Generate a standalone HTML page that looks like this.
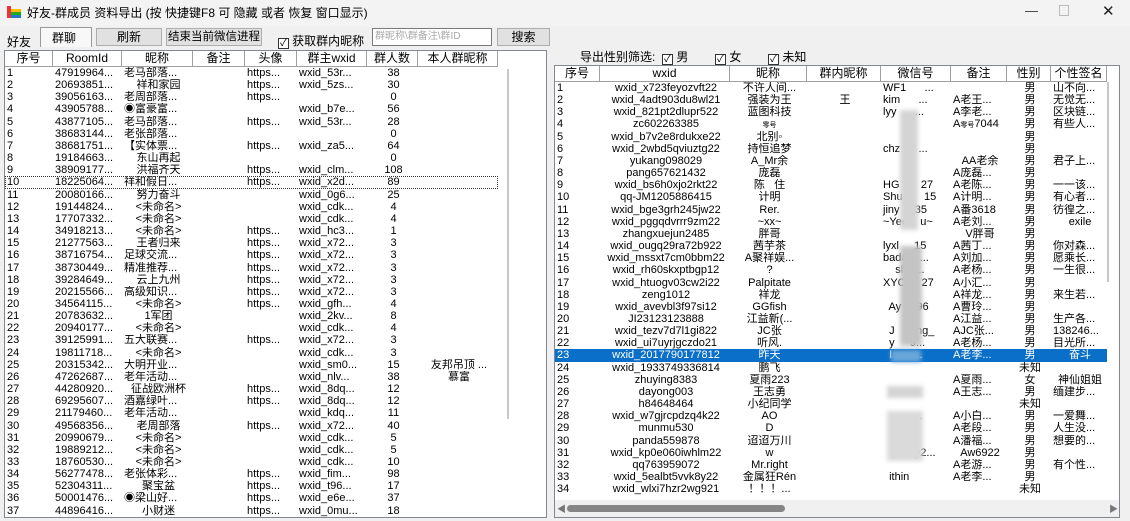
<!DOCTYPE html>
<html><head><meta charset="utf-8"><style>
*{box-sizing:border-box;margin:0;padding:0}
body{width:1130px;height:521px;overflow:hidden;background:#f0f0f0;font-family:"Liberation Sans","Noto Sans CJK SC",sans-serif;font-size:11px;color:#000;position:relative}
.abs{position:absolute}
.title{left:0;top:0;width:1130px;height:26px;background:#f3f3f3}
.btn{position:absolute;border:1px solid #adadad;background:#e1e1e1;text-align:center;font-size:12px;line-height:16px;white-space:nowrap;overflow:hidden}
.lb{position:absolute;background:#fff;border:1px solid #828790;overflow:hidden}
table,tbody{display:block;position:absolute;left:0}
tr{display:flex;height:12.17px;overflow:hidden}
tr.h{height:16px}
td{display:block;flex:none;height:12.17px;line-height:12px;white-space:nowrap;overflow:hidden;padding:0 0 0 2px}
th{display:block;flex:none;height:16px;font-weight:normal;font-size:12px;border-right:1px solid #a0a0a0;border-bottom:1px solid #a0a0a0;background:#fff;line-height:15px;white-space:nowrap;overflow:hidden;text-align:center}
#L td:nth-child(1),#L th:nth-child(1){width:48px}
#L td:nth-child(2),#L th:nth-child(2){width:69px}
#L td:nth-child(3),#L th:nth-child(3){width:71px}
#L td:nth-child(4),#L th:nth-child(4){width:52px}
#L td:nth-child(5),#L th:nth-child(5){width:52px}
#L td:nth-child(6),#L th:nth-child(6){width:70px}
#L td:nth-child(7),#L th:nth-child(7){width:51px}
#L td:nth-child(8),#L th:nth-child(8){width:80px}
#R td:nth-child(1),#R th:nth-child(1){width:45px}
#R td:nth-child(2),#R th:nth-child(2){width:130px}
#R td:nth-child(3),#R th:nth-child(3){width:77px}
#R td:nth-child(4),#R th:nth-child(4){width:74px}
#R td:nth-child(5),#R th:nth-child(5){width:70px}
#R td:nth-child(6),#R th:nth-child(6){width:56px}
#R td:nth-child(7),#R th:nth-child(7){width:44px}
#R td:nth-child(8),#R th:nth-child(8){width:56px}
.c{text-align:center}
.sel td{background:#0a6fc8;color:#fff}
.blur{position:absolute;background:#d4d4d4;filter:blur(2px)}
.cb{display:inline-block;width:11px;height:11px;border:1px solid #333;background:#fff;font-size:10px;line-height:9px;text-align:center;vertical-align:-1px}
.sm{font-size:7px}
</style></head><body>
<div class="abs title"></div>
<svg class="abs" style="left:7px;top:5px" width="14" height="14"><rect x="0" y="1" width="4" height="12" fill="#e33"/><rect x="4" y="4" width="10" height="3" fill="#fb0"/><rect x="4" y="7" width="10" height="3" fill="#2a2"/><rect x="4" y="10" width="10" height="3" fill="#27c"/></svg>
<div class="abs" style="left:27px;top:4px;font-size:12px">好友-群成员 资料导出 (按 快捷键F8 可 隐藏 或者 恢复 窗口显示)</div>
<div class="abs" style="left:1025px;top:3px;font-size:13px;color:#333">—</div>
<div class="abs" style="left:1059px;top:5px;width:10px;height:11px;border:1px solid #bbb"></div>
<div class="abs" style="left:1102px;top:2px;font-size:15px;color:#222">✕</div>

<div class="abs" style="left:7px;top:33px;font-size:12px">好友</div>
<div class="abs" style="left:40px;top:27px;width:52px;height:20px;border:1px solid #999;border-bottom:none;background:#f8f8f8"></div>
<div class="abs" style="left:52px;top:29px;font-size:12px">群聊</div>
<div class="btn" style="left:96px;top:28px;width:66px;height:18px">刷新</div>
<div class="btn" style="left:166px;top:28px;width:96px;height:18px;font-size:11.5px">结束当前微信进程</div>
<div class="abs" style="left:278px;top:32px"><span class="cb">✓</span> <span style="font-size:12px">获取群内昵称</span></div>
<div class="abs" style="left:372px;top:28px;width:120px;height:18px;background:#fff;border:1px solid #7a7a7a;color:#aaa;font-size:10px;line-height:16px;padding-left:2px">群昵称\群备注\群ID</div>
<div class="btn" style="left:497px;top:28px;width:53px;height:18px">搜索</div>

<div class="lb" style="left:4px;top:50px;width:543px;height:468px">
<table id="L" style="top:0;width:493px"><tbody>
<tr class="h"><th>序号</th><th>RoomId</th><th>昵称</th><th>备注</th><th>头像</th><th>群主wxid</th><th>群人数</th><th>本人群昵称</th></tr>
<tr><td>1</td><td>47919964...</td><td>老马部落...</td><td></td><td>https...</td><td>wxid_53r...</td><td class="c">38</td><td></td></tr>
<tr><td>2</td><td>20693851...</td><td class="c">祥和家园</td><td></td><td>https...</td><td>wxid_5zs...</td><td class="c">30</td><td></td></tr>
<tr><td>3</td><td>39056163...</td><td>老周部落...</td><td></td><td>https...</td><td></td><td class="c">0</td><td></td></tr>
<tr><td>4</td><td>43905788...</td><td>◉富豪富...</td><td></td><td></td><td>wxid_b7e...</td><td class="c">56</td><td></td></tr>
<tr><td>5</td><td>43877105...</td><td>老马部落...</td><td></td><td>https...</td><td>wxid_53r...</td><td class="c">28</td><td></td></tr>
<tr><td>6</td><td>38683144...</td><td>老张部落...</td><td></td><td></td><td></td><td class="c">0</td><td></td></tr>
<tr><td>7</td><td>38681751...</td><td>【实体票...</td><td></td><td>https...</td><td>wxid_za5...</td><td class="c">64</td><td></td></tr>
<tr><td>8</td><td>19184663...</td><td class="c">东山再起</td><td></td><td></td><td></td><td class="c">0</td><td></td></tr>
<tr><td>9</td><td>38909177...</td><td class="c">洪福齐天</td><td></td><td>https...</td><td>wxid_clm...</td><td class="c">108</td><td></td></tr>
<tr style="outline:1px dotted #333;outline-offset:-1px"><td>10</td><td>18225064...</td><td>祥和假日...</td><td></td><td>https...</td><td>wxid_x2d...</td><td class="c">89</td><td></td></tr>
<tr><td>11</td><td>20080166...</td><td class="c">努力奋斗</td><td></td><td></td><td>wxid_0g6...</td><td class="c">25</td><td></td></tr>
<tr><td>12</td><td>19144824...</td><td class="c">&lt;未命名&gt;</td><td></td><td></td><td>wxid_cdk...</td><td class="c">4</td><td></td></tr>
<tr><td>13</td><td>17707332...</td><td class="c">&lt;未命名&gt;</td><td></td><td></td><td>wxid_cdk...</td><td class="c">4</td><td></td></tr>
<tr><td>14</td><td>34918213...</td><td class="c">&lt;未命名&gt;</td><td></td><td>https...</td><td>wxid_hc3...</td><td class="c">1</td><td></td></tr>
<tr><td>15</td><td>21277563...</td><td class="c">王者归来</td><td></td><td>https...</td><td>wxid_x72...</td><td class="c">3</td><td></td></tr>
<tr><td>16</td><td>38716754...</td><td>足球交流...</td><td></td><td>https...</td><td>wxid_x72...</td><td class="c">3</td><td></td></tr>
<tr><td>17</td><td>38730449...</td><td>精准推荐...</td><td></td><td>https...</td><td>wxid_x72...</td><td class="c">3</td><td></td></tr>
<tr><td>18</td><td>39284649...</td><td class="c">云上九州</td><td></td><td>https...</td><td>wxid_x72...</td><td class="c">3</td><td></td></tr>
<tr><td>19</td><td>20215566...</td><td>高级知识...</td><td></td><td>https...</td><td>wxid_x72...</td><td class="c">3</td><td></td></tr>
<tr><td>20</td><td>34564115...</td><td class="c">&lt;未命名&gt;</td><td></td><td>https...</td><td>wxid_gfh...</td><td class="c">4</td><td></td></tr>
<tr><td>21</td><td>20783632...</td><td class="c">1军团</td><td></td><td></td><td>wxid_2kv...</td><td class="c">8</td><td></td></tr>
<tr><td>22</td><td>20940177...</td><td class="c">&lt;未命名&gt;</td><td></td><td></td><td>wxid_cdk...</td><td class="c">4</td><td></td></tr>
<tr><td>23</td><td>39125991...</td><td>五大联赛...</td><td></td><td>https...</td><td>wxid_x72...</td><td class="c">3</td><td></td></tr>
<tr><td>24</td><td>19811718...</td><td class="c">&lt;未命名&gt;</td><td></td><td></td><td>wxid_cdk...</td><td class="c">3</td><td></td></tr>
<tr><td>25</td><td>20315342...</td><td>大明开业...</td><td></td><td></td><td>wxid_sm0...</td><td class="c">15</td><td class="c">友邦吊顶 ...</td></tr>
<tr><td>26</td><td>47262687...</td><td>老年活动...</td><td></td><td></td><td>wxid_nlv...</td><td class="c">38</td><td class="c">慕富</td></tr>
<tr><td>27</td><td>44280920...</td><td class="c">征战欧洲杯</td><td></td><td>https...</td><td>wxid_8dq...</td><td class="c">12</td><td></td></tr>
<tr><td>28</td><td>69295607...</td><td>酒嘉绿叶...</td><td></td><td>https...</td><td>wxid_8dq...</td><td class="c">12</td><td></td></tr>
<tr><td>29</td><td>21179460...</td><td>老年活动...</td><td></td><td></td><td>wxid_kdq...</td><td class="c">11</td><td></td></tr>
<tr><td>30</td><td>49568356...</td><td class="c">老周部落</td><td></td><td>https...</td><td>wxid_x72...</td><td class="c">40</td><td></td></tr>
<tr><td>31</td><td>20990679...</td><td class="c">&lt;未命名&gt;</td><td></td><td></td><td>wxid_cdk...</td><td class="c">5</td><td></td></tr>
<tr><td>32</td><td>19889212...</td><td class="c">&lt;未命名&gt;</td><td></td><td></td><td>wxid_cdk...</td><td class="c">5</td><td></td></tr>
<tr><td>33</td><td>18760530...</td><td class="c">&lt;未命名&gt;</td><td></td><td></td><td>wxid_cdk...</td><td class="c">10</td><td></td></tr>
<tr><td>34</td><td>56277478...</td><td>老张体彩...</td><td></td><td>https...</td><td>wxid_fim...</td><td class="c">98</td><td></td></tr>
<tr><td>35</td><td>52304311...</td><td class="c">聚宝盆</td><td></td><td>https...</td><td>wxid_t96...</td><td class="c">17</td><td></td></tr>
<tr><td>36</td><td>50001476...</td><td>◉梁山好...</td><td></td><td>https...</td><td>wxid_e6e...</td><td class="c">37</td><td></td></tr>
<tr><td>37</td><td>44896416...</td><td class="c">小财迷</td><td></td><td>https...</td><td>wxid_0mu...</td><td class="c">18</td><td></td></tr>
</tbody></table>
<div class="abs" style="left:502px;top:18px;width:2px;height:350px;background:#c8c8c8"></div>
</div>

<div class="abs" style="left:580px;top:48px;font-size:12px">导出性别筛选: &nbsp;<span class="cb">✓</span> 男 &nbsp; &nbsp; &nbsp; &nbsp;<span class="cb">✓</span> 女 &nbsp; &nbsp; &nbsp; &nbsp;<span class="cb">✓</span> 未知</div>

<div class="lb" style="left:554px;top:65px;width:566px;height:453px">
<table id="R" style="top:0;width:552px"><tbody>
<tr class="h"><th>序号</th><th>wxid</th><th>昵称</th><th>群内昵称</th><th>微信号</th><th>备注</th><th>性别</th><th>个性签名</th></tr>
<tr><td>1</td><td class="c">wxid_x723feyozvft22</td><td class="c">不许人间...</td><td></td><td>WF1 &nbsp; &nbsp; &nbsp;...</td><td></td><td class="c">男</td><td>山不向...</td></tr>
<tr><td>2</td><td class="c">wxid_4adt903du8wl21</td><td class="c">强装为王</td><td class="c">王</td><td>kim &nbsp; &nbsp; &nbsp;...</td><td>A老王...</td><td class="c">男</td><td>无觉无...</td></tr>
<tr><td>3</td><td class="c">wxid_821pt2dlupr522</td><td class="c">蓝图科技</td><td></td><td>lyy &nbsp; &nbsp; &nbsp;...</td><td>A李老...</td><td class="c">男</td><td>区块链...</td></tr>
<tr><td>4</td><td class="c">zc602263385</td><td class="c"><span class="sm">零号</span></td><td></td><td></td><td>A<span class="sm">零号</span>7044</td><td class="c">男</td><td>有些人...</td></tr>
<tr><td>5</td><td class="c">wxid_b7v2e8rdukxe22</td><td class="c">北别◦</td><td></td><td></td><td></td><td class="c">男</td><td></td></tr>
<tr><td>6</td><td class="c">wxid_2wbd5qviuztg22</td><td class="c">持恒追梦</td><td></td><td>chz &nbsp; &nbsp; &nbsp;...</td><td></td><td class="c">男</td><td></td></tr>
<tr><td>7</td><td class="c">yukang098029</td><td class="c">A_Mr余</td><td></td><td></td><td class="c">AA老余</td><td class="c">男</td><td>君子上...</td></tr>
<tr><td>8</td><td class="c">pang657621432</td><td class="c">庞磊</td><td></td><td></td><td>A庞磊...</td><td class="c">男</td><td></td></tr>
<tr><td>9</td><td class="c">wxid_bs6h0xjo2rkt22</td><td class="c">陈 &nbsp; 住</td><td></td><td>HG &nbsp; &nbsp; &nbsp; 27</td><td>A老陈...</td><td class="c">男</td><td>一一该...</td></tr>
<tr><td>10</td><td class="c">qq-JM1205886415</td><td class="c">计明</td><td></td><td>Shu &nbsp; &nbsp; &nbsp; 15</td><td>A计明...</td><td class="c">男</td><td>有心者...</td></tr>
<tr><td>11</td><td class="c">wxid_bge3grh245jw22</td><td class="c">Rer.</td><td></td><td>jiny &nbsp; &nbsp; 35</td><td>A番3618</td><td class="c">男</td><td>彷徨之...</td></tr>
<tr><td>12</td><td class="c">wxid_pggqdvrrr9zm22</td><td class="c">~xx~</td><td></td><td>~Yee &nbsp; &nbsp;u~</td><td>A老刘...</td><td class="c">男</td><td class="c">exile</td></tr>
<tr><td>13</td><td class="c">zhangxuejun2485</td><td class="c">胖哥</td><td></td><td></td><td class="c">V胖哥</td><td class="c">男</td><td></td></tr>
<tr><td>14</td><td class="c">wxid_ougq29ra72b922</td><td class="c">茜芋茶</td><td></td><td>lyxl &nbsp; &nbsp; 15</td><td>A茜丁...</td><td class="c">男</td><td>你对森...</td></tr>
<tr><td>15</td><td class="c">wxid_mssxt7cm0bbm22</td><td class="c">A聚祥娱...</td><td></td><td>bada &nbsp; &nbsp;...</td><td>A刘加...</td><td class="c">男</td><td>愿乘长...</td></tr>
<tr><td>16</td><td class="c">wxid_rh60skxptbgp12</td><td class="c">?</td><td></td><td>&nbsp; &nbsp; sl &nbsp; &nbsp;...</td><td>A老杨...</td><td class="c">男</td><td>一生很...</td></tr>
<tr><td>17</td><td class="c">wxid_htuogv03cw2i22</td><td class="c">Palpitate</td><td></td><td>XYO &nbsp; &nbsp; 27</td><td>A小汇...</td><td class="c">男</td><td></td></tr>
<tr><td>18</td><td class="c">zeng1012</td><td class="c">祥龙</td><td></td><td></td><td>A祥龙...</td><td class="c">男</td><td>来生若...</td></tr>
<tr><td>19</td><td class="c">wxid_avevbl3f97si12</td><td class="c">GGfish</td><td></td><td>&nbsp; Ay &nbsp; &nbsp; 96</td><td>A曹玲...</td><td class="c">男</td><td></td></tr>
<tr><td>20</td><td class="c">JI23123123888</td><td class="c">江益新(...</td><td></td><td></td><td>A江益...</td><td class="c">男</td><td>生产各...</td></tr>
<tr><td>21</td><td class="c">wxid_tezv7d7l1gi822</td><td class="c">JC张</td><td></td><td>&nbsp; J &nbsp; &nbsp; ang_</td><td>AJC张...</td><td class="c">男</td><td>138246...</td></tr>
<tr><td>22</td><td class="c">wxid_ui7uyrjgczdo21</td><td class="c">听风.</td><td></td><td>&nbsp; y &nbsp; &nbsp; 9...</td><td>A老杨...</td><td class="c">男</td><td>目光所...</td></tr>
<tr class="sel"><td>23</td><td class="c">wxid_2017790177812</td><td class="c">昨天</td><td></td><td>&nbsp; I &nbsp; &nbsp; &nbsp; ...</td><td>A老李...</td><td class="c">男</td><td class="c">奋斗</td></tr>
<tr><td>24</td><td class="c">wxid_1933749336814</td><td class="c">鹏飞</td><td></td><td></td><td></td><td class="c">未知</td><td></td></tr>
<tr><td>25</td><td class="c">zhuying8383</td><td class="c">夏雨223</td><td></td><td></td><td>A夏雨...</td><td class="c">女</td><td class="c">神仙姐姐</td></tr>
<tr><td>26</td><td class="c">dayong003</td><td class="c">王志勇</td><td></td><td></td><td>A王志...</td><td class="c">男</td><td>缅建步...</td></tr>
<tr><td>27</td><td class="c">h84648464</td><td class="c">小纪同学</td><td></td><td></td><td></td><td class="c">未知</td><td></td></tr>
<tr><td>28</td><td class="c">wxid_w7gjrcpdzq4k22</td><td class="c">AO</td><td></td><td>&nbsp; &nbsp; &nbsp; &nbsp; &nbsp; ...</td><td>A小白...</td><td class="c">男</td><td>一爱舞...</td></tr>
<tr><td>29</td><td class="c">munmu530</td><td class="c">D</td><td></td><td></td><td>A老段...</td><td class="c">男</td><td>人生没...</td></tr>
<tr><td>30</td><td class="c">panda559878</td><td class="c">迢迢万川</td><td></td><td></td><td>A潘福...</td><td class="c">男</td><td>想要的...</td></tr>
<tr><td>31</td><td class="c">wxid_kp0e060iwhlm22</td><td class="c">w</td><td></td><td>&nbsp; &nbsp;ywmy2...</td><td class="c">Aw6922</td><td class="c">男</td><td></td></tr>
<tr><td>32</td><td class="c">qq763959072</td><td class="c">Mr.right</td><td></td><td></td><td>A老游...</td><td class="c">男</td><td>有个性...</td></tr>
<tr><td>33</td><td class="c">wxid_5ealbt5vvk8y22</td><td class="c">金属狂Rén</td><td></td><td>&nbsp; ithin</td><td>A老李...</td><td class="c">男</td><td></td></tr>
<tr><td>34</td><td class="c">wxid_wlxi7hzr2wg921</td><td class="c">！！！...</td><td></td><td></td><td></td><td class="c">未知</td><td></td></tr>
</tbody></table>
<div class="blur" style="left:345px;top:44px;width:18px;height:120px"></div>
<div class="blur" style="left:345px;top:180px;width:22px;height:100px;background:#c4c4c4"></div>
<div class="blur" style="left:336px;top:284px;width:30px;height:12px;background:#6aa6da"></div>
<div class="blur" style="left:332px;top:320px;width:36px;height:12px"></div>
<div class="blur" style="left:332px;top:345px;width:36px;height:50px;background:#dadada"></div>
<div class="abs" style="left:552px;top:16px;width:2px;height:200px;background:#c8c8c8"></div>
<div class="abs" style="left:0;top:434px;width:565px;height:17px;background:#f0f0f0"></div>
<div class="abs" style="left:12px;top:439px;width:218px;height:7px;border-radius:4px;background:#858585"></div>
<div class="abs" style="left:2px;top:436px;color:#777;font-size:9px">◀</div>
<div class="abs" style="left:554px;top:436px;color:#777;font-size:9px">▶</div>
</div>
</body></html>
